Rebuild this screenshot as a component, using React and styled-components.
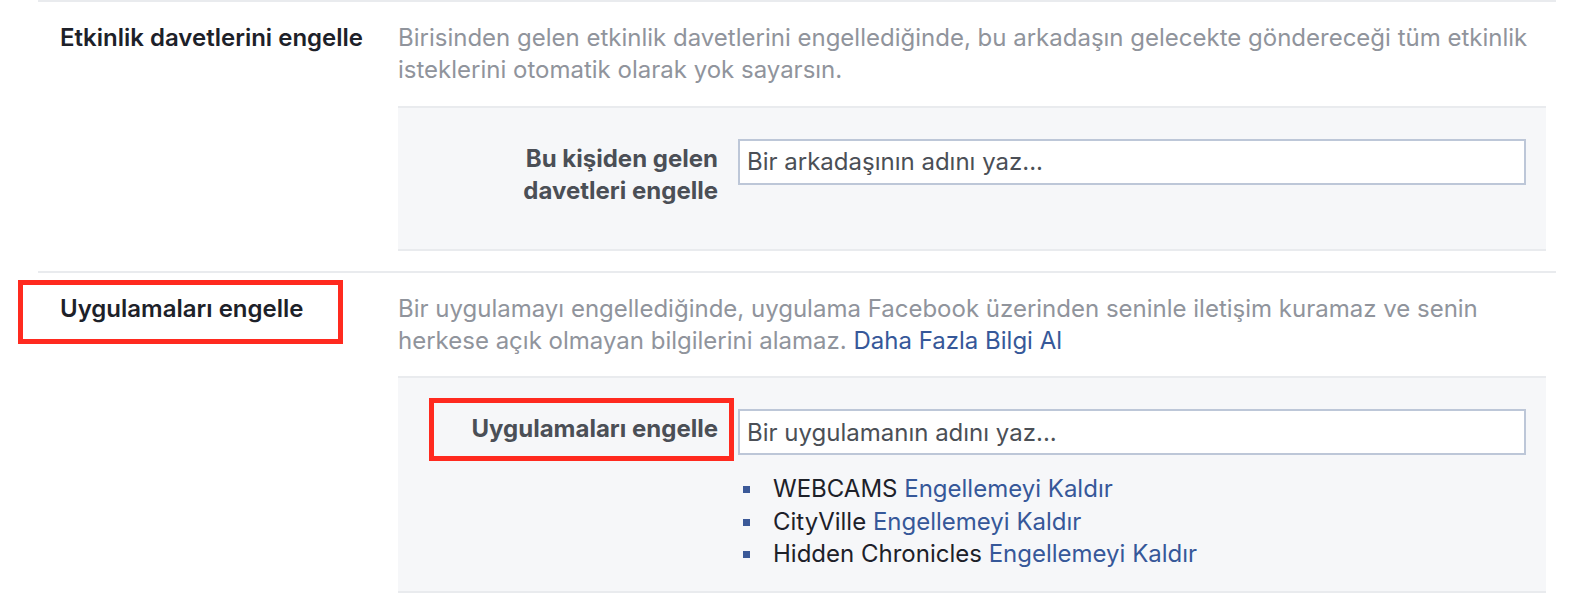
import React from 'react';
import styled, { createGlobalStyle } from 'styled-components';

const GlobalStyle = createGlobalStyle`
  html, body {
    margin: 0;
    padding: 0;
    background: #fff;
    overflow: hidden;
  }
  body {
    font-family: Inter, Roboto, 'Noto Sans', Arial, sans-serif;
    -webkit-font-smoothing: antialiased;
  }
`;

const Page = styled.div`
  width: 1518px;
  margin-left: 38px;
`;

const Section = styled.div`
  display: grid;
  grid-template-columns: 360px 1fr;
  border-top: 2px solid #e9ebee;
  padding: 20px 0 20px 0;
`;

const SectionTitle = styled.div`
  padding-left: 22px;
  font-size: 24px;
  line-height: 32.4px;
  font-weight: 600;
  color: #1d2129;
`;

const Content = styled.div`
  padding-right: 10px;
`;

const Description = styled.div`
  font-size: 24px;
  line-height: 32.4px;
  color: #90949c;
  margin-bottom: 19px;
`;

const Link = styled.a`
  color: #365899;
  text-decoration: none;
  cursor: pointer;
`;

const GrayBox = styled.div`
  display: grid;
  grid-template-columns: 320px 1fr;
  column-gap: 20px;
  background: #f6f7f9;
  border-top: 2px solid #e9ebee;
  border-bottom: 2px solid #e9ebee;
  padding: 31px 20px 20px 0;
`;

const FieldLabel = styled.div`
  text-align: right;
  font-size: 24px;
  line-height: 32.4px;
  font-weight: 700;
  color: #4b4f56;
  padding: 4px 0 21px 0;
`;

const Marked = styled.span`
  position: relative;
  display: inline-block;

  &::after {
    content: '';
    position: absolute;
    top: ${(p) => p.$top}px;
    ${(p) => (p.$right !== undefined ? `right: ${p.$right}px;` : `left: ${p.$left}px;`)}
    width: ${(p) => p.$width}px;
    height: ${(p) => p.$height}px;
    border: 5px solid #ff2a1f;
    box-sizing: border-box;
    pointer-events: none;
  }
`;

const TextInput = styled.input`
  display: block;
  width: 100%;
  height: 46px;
  box-sizing: border-box;
  border: 2px solid #bdc7d8;
  background: #fff;
  padding: 0 7px;
  margin: 0;
  font-family: inherit;
  font-size: 24px;
  color: #1d2129;
  outline: none;

  &::placeholder {
    color: #4b4f56;
    opacity: 1;
  }
`;

const BlockedList = styled.ul`
  list-style: none;
  margin: 18px 0 0 0;
  padding: 0 0 0 5px;
`;

const BlockedItem = styled.li`
  display: flex;
  align-items: center;
  font-size: 24px;
  line-height: 32.4px;
  color: #1d2129;
`;

const Bullet = styled.span`
  width: 7px;
  height: 7px;
  background: #3b5998;
  margin-right: 23px;
  flex: none;
`;

const blockedApps = ['WEBCAMS', 'CityVille', 'Hidden Chronicles'];

function App() {
  return (
    <Page>
      <GlobalStyle />

      <Section>
        <SectionTitle>Etkinlik davetlerini engelle</SectionTitle>
        <Content>
          <Description>
            Birisinden gelen etkinlik davetlerini engellediğinde, bu arkadaşın gelecekte göndereceği tüm etkinlik
            <br />
            isteklerini otomatik olarak yok sayarsın.
          </Description>
          <GrayBox>
            <FieldLabel>
              Bu kişiden gelen
              <br />
              davetleri engelle
            </FieldLabel>
            <div>
              <TextInput placeholder="Bir arkadaşının adını yaz..." />
            </div>
          </GrayBox>
        </Content>
      </Section>

      <Section>
        <SectionTitle>
          <Marked $top={-13} $left={-42} $width={325} $height={64}>
            Uygulamaları engelle
          </Marked>
        </SectionTitle>
        <Content>
          <Description>
            Bir uygulamayı engellediğinde, uygulama Facebook üzerinden seninle iletişim kuramaz ve senin
            <br />
            herkese açık olmayan bilgilerini alamaz. <Link>Daha Fazla Bilgi Al</Link>
          </Description>
          <GrayBox>
            <FieldLabel>
              <Marked $top={-15} $right={-16} $width={305} $height={63}>
                Uygulamaları engelle
              </Marked>
            </FieldLabel>
            <div>
              <TextInput placeholder="Bir uygulamanın adını yaz..." />
              <BlockedList>
                {blockedApps.map((name) => (
                  <BlockedItem key={name}>
                    <Bullet />
                    <span>
                      {name} <Link>Engellemeyi Kaldır</Link>
                    </span>
                  </BlockedItem>
                ))}
              </BlockedList>
            </div>
          </GrayBox>
        </Content>
      </Section>
    </Page>
  );
}

export default App;
